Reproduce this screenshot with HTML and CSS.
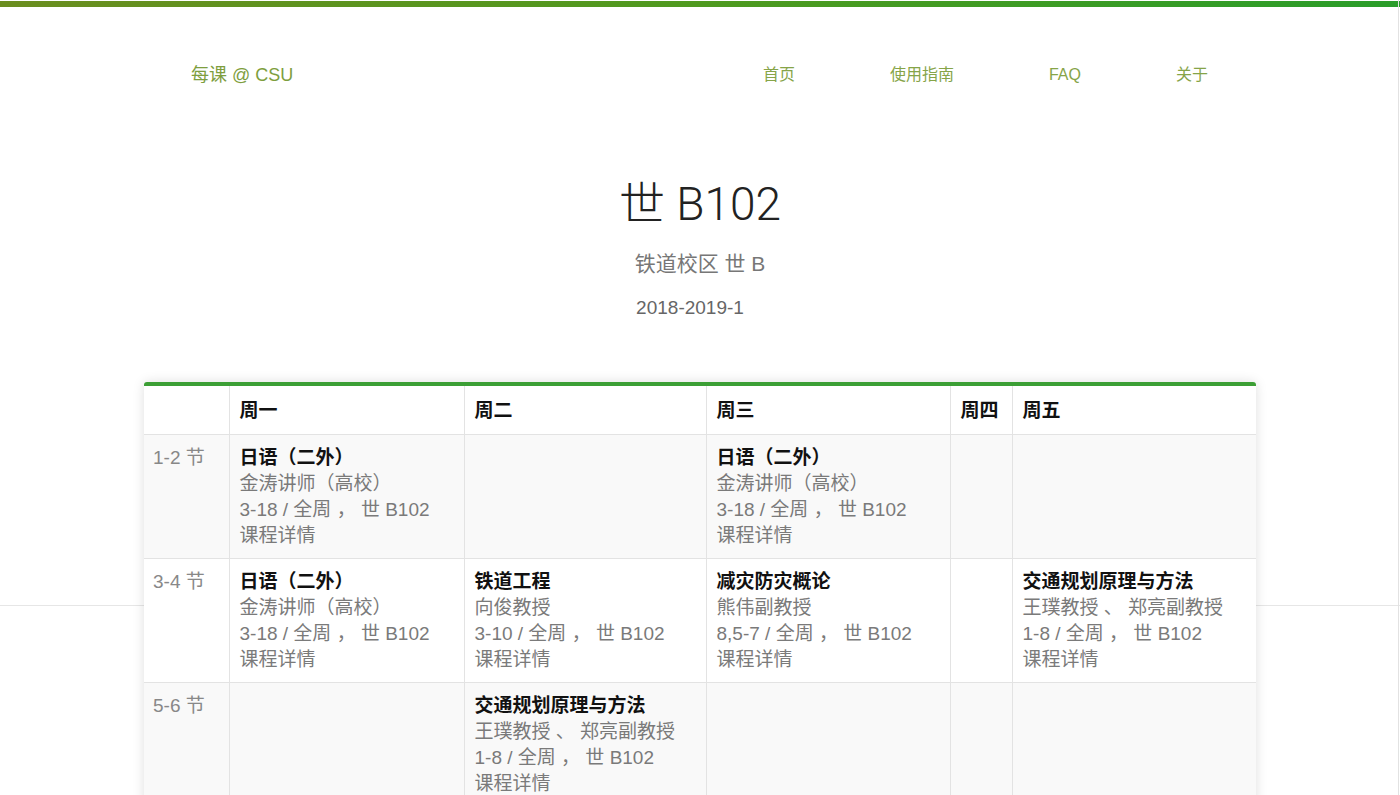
FILE: index.html
```html
<!DOCTYPE html>
<html lang="zh-CN">
<head>
<meta charset="utf-8">
<title>世 B102 - 每课 @ CSU</title>
<link rel="stylesheet" href="styles.css">
</head>
<body>
<div class="page">
  <div class="topbar"></div>
  <header class="nav">
    <div class="nav-inner">
      <a class="brand" href="#">每课 @ CSU</a>
      <nav class="links">
        <a href="#">首页</a>
        <a href="#">使用指南</a>
        <a href="#">FAQ</a>
        <a href="#">关于</a>
      </nav>
    </div>
  </header>
  <section class="hero">
    <h1 class="title">世 B102</h1>
    <p class="sub">铁道校区 世 B</p>
    <p class="term">2018-2019-1</p>
  </section>
  <main class="main">
    <div class="card">
      <table class="tt">
        <colgroup>
          <col class="c0"><col class="c1"><col class="c2"><col class="c3"><col class="c4"><col class="c5">
        </colgroup>
        <thead>
          <tr><th></th><th>周一</th><th>周二</th><th>周三</th><th>周四</th><th>周五</th></tr>
        </thead>
        <tbody>
          <tr class="odd">
            <td class="period">1-2 节</td>
            <td><div class="cname">日语（二外）</div><div>金涛讲师（高校）</div><div>3-18 / 全周 ， 世 B102</div><div>课程详情</div></td>
            <td></td>
            <td><div class="cname">日语（二外）</div><div>金涛讲师（高校）</div><div>3-18 / 全周 ， 世 B102</div><div>课程详情</div></td>
            <td></td>
            <td></td>
          </tr>
          <tr>
            <td class="period">3-4 节</td>
            <td><div class="cname">日语（二外）</div><div>金涛讲师（高校）</div><div>3-18 / 全周 ， 世 B102</div><div>课程详情</div></td>
            <td><div class="cname">铁道工程</div><div>向俊教授</div><div>3-10 / 全周 ， 世 B102</div><div>课程详情</div></td>
            <td><div class="cname">减灾防灾概论</div><div>熊伟副教授</div><div>8,5-7 / 全周 ， 世 B102</div><div>课程详情</div></td>
            <td></td>
            <td><div class="cname">交通规划原理与方法</div><div>王璞教授 、 郑亮副教授</div><div>1-8 / 全周 ， 世 B102</div><div>课程详情</div></td>
          </tr>
          <tr class="odd">
            <td class="period">5-6 节</td>
            <td></td>
            <td><div class="cname">交通规划原理与方法</div><div>王璞教授 、 郑亮副教授</div><div>1-8 / 全周 ， 世 B102</div><div>课程详情</div></td>
            <td></td>
            <td></td>
            <td></td>
          </tr>
        </tbody>
      </table>
    </div>
  </main>
</div>
</body>
</html>
```
FILE: styles.css
```css
html, body {
  margin: 0;
  padding: 0;
  background: #fff;
}
body {
  font-family: "Liberation Sans", "Noto Sans CJK SC", sans-serif;
  color: #333;
}
.page {
  min-height: 795px;
  padding-top: 1px;
  box-sizing: border-box;
}
.page::after {
  content: "";
  position: fixed;
  top: 0;
  right: 1px;
  width: 1px;
  height: 100%;
  background: #e2e2e2;
  z-index: 5;
}
.topbar {
  height: 6px;
  background: linear-gradient(90deg, #6b8e1f 0%, #4f9a1f 50%, #2a9d2a 100%);
}
.nav-inner {
  width: 1048px;
  margin: 0 auto;
  padding: 56px 16px 0 15px;
  box-sizing: border-box;
  display: flex;
  justify-content: space-between;
  align-items: center;
  line-height: 24px;
}
.brand {
  color: #7e9e3e;
  font-size: 18px;
  text-decoration: none;
}
.links {
  display: flex;
  gap: 95px;
}
.links a {
  color: #86a448;
  font-size: 16px;
  text-decoration: none;
}
.hero {
  text-align: center;
  padding-top: 91px;
  padding-bottom: 285px;
  border-bottom: 1px solid #e6e6e6;
}
.title {
  margin: 0;
  font-family: "Roboto", "Noto Sans CJK SC", sans-serif;
  font-weight: 300;
  font-size: 46px;
  line-height: 52px;
  color: #222;
}
.sub {
  margin: 20px 0 0;
  font-size: 21px;
  line-height: 28px;
  color: #777;
}
.term {
  margin: 18px 0 0;
  padding-right: 20px;
  font-size: 19px;
  line-height: 24px;
  color: #666;
}
.main {
  margin-top: -224px;
}
.card {
  position: relative;
  width: 1112px;
  margin: 0 auto;
  border-top: 4px solid #3c9f35;
  border-radius: 3px 3px 0 0;
  background: #fff;
  box-shadow: 0 0 12px rgba(0, 0, 0, 0.13);
}
.tt {
  width: 1112px;
  border-collapse: collapse;
  table-layout: fixed;
  font-size: 19px;
  line-height: 26px;
}
.c0 { width: 85px; }
.c1 { width: 235px; }
.c2 { width: 242px; }
.c3 { width: 244px; }
.c4 { width: 62px; }
.c5 { width: 244px; }
.tt th, .tt td {
  border: 1px solid #e3e3e3;
  text-align: left;
  vertical-align: top;
  padding: 10px;
}
.tt tr > :first-child { border-left: none; }
.tt tr > :last-child { border-right: none; }
.tt thead th {
  border-top: none;
  height: 27px;
  padding-top: 11px;
  font-weight: bold;
  color: #111;
  vertical-align: middle;
}
.tt tbody td {
  color: #7a7a7a;
  height: 104px;
  padding-top: 10px;
  padding-bottom: 9px;
}
.tt tbody tr.odd td {
  background: #f9f9f9;
}
.tt td.period {
  color: #888;
  padding-left: 9px;
}
.cname {
  font-weight: bold;
  color: #111;
}
```
